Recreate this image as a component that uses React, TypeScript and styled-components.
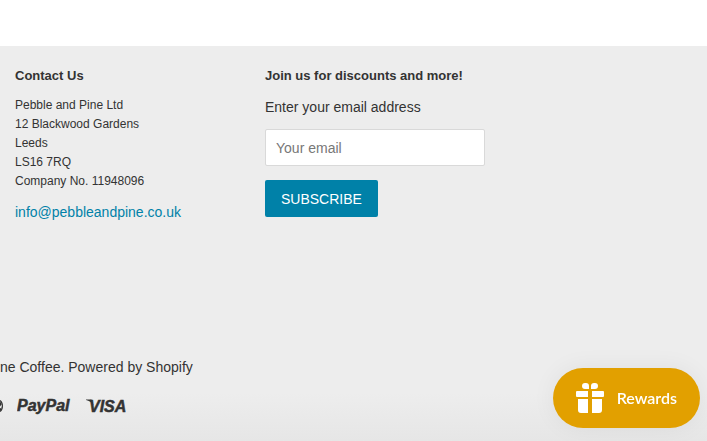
import React from "react";
import styled, { createGlobalStyle } from "styled-components";

const GlobalStyle = createGlobalStyle`
  *, *::before, *::after { box-sizing: border-box; }
  body {
    margin: 0;
    background: #fff;
    color: #333;
    font: 14px/20px "Liberation Sans", Arial, Helvetica, sans-serif;
  }
`;

const Page = styled.div`
  display: flex;
  flex-direction: column;
  min-height: 100vh;
  padding-top: 46px;
  overflow: hidden;
`;

const Footer = styled.footer`
  flex: 1;
  display: flex;
  flex-direction: column;
  justify-content: space-between;
  padding: 20px 15px 23px;
  background: linear-gradient(to top, #e6e6e6, #ededed 48px);
`;

const Columns = styled.div`
  display: grid;
  grid-template-columns: repeat(auto-fill, 220px);
  gap: 30px;
`;

const Column = styled.section`
  display: flex;
  flex-direction: column;
  align-items: flex-start;
`;

const Heading = styled.h4`
  margin: 0 0 10px;
  font-size: 13px;
  line-height: 20px;
  font-weight: 700;
`;

const Address = styled.address`
  margin-bottom: 11px;
  font-size: 12px;
  line-height: 19px;
  font-style: normal;
`;

const EmailLink = styled.a`
  color: #0081a8;
  text-decoration: none;
`;

const Form = styled.form`
  display: flex;
  flex-direction: column;
  align-items: flex-start;
  width: 100%;
`;

const Label = styled.label`
  margin: 1px 0 12px;
`;

const EmailInput = styled.input`
  width: 100%;
  height: 37px;
  margin-bottom: 14px;
  padding: 0 10px;
  border: 1px solid #d9d9d9;
  border-radius: 2px;
  background: #fff;
  color: #333;
  font: inherit;
  &::placeholder { color: #777; opacity: 1; }
`;

const SubscribeButton = styled.button`
  height: 37px;
  padding: 0 16px;
  border: 0;
  border-radius: 2px;
  background: #0081a8;
  color: #fff;
  font: inherit;
  text-transform: uppercase;
`;

const Legal = styled.div`
  display: flex;
  flex-direction: column;
  gap: 17px;
  margin-left: -15px;
`;

const Copyright = styled.p`
  margin: 0;
  a { color: inherit; text-decoration: none; }
`;

const Payments = styled.ul`
  display: flex;
  align-items: center;
  gap: 14px;
  margin: 0;
  padding: 0;
  list-style: none;
`;

const Payment = styled.li`
  display: flex;
  height: 24px;
  svg { display: block; }
`;

const RewardsButton = styled.button`
  position: fixed;
  right: 7px;
  bottom: 13px;
  display: flex;
  align-items: center;
  gap: 13px;
  height: 60px;
  padding: 0 23px;
  border: 0;
  border-radius: 30px;
  background: #e2a000;
  box-shadow: 0 0 24px rgba(0, 0, 0, 0.06);
  color: #fff;
  font: 600 16px/24px Lato, sans-serif;
`;

const addressLines = [
  "Pebble and Pine Ltd",
  "12 Blackwood Gardens",
  "Leeds",
  "LS16 7RQ",
  "Company No. 11948096",
];

const Wordmark = styled.text`
  fill: #333;
  stroke: #333;
  stroke-width: 0.5px;
  font: italic 700 16px "Liberation Sans", Arial, sans-serif;
`;

function CardMark() {
  return (
    <svg width="3" height="24" viewBox="0 0 3 24" aria-hidden="true">
      <path d="M0 6.500C1.600 7.600 2.400 9.700 2.400 12S1.600 16.400 0 17.500" fill="none" stroke="#333" strokeWidth="1.200" />
      <path d="M0 7.500l1.800 2.500L0 12.500zM0 14.500l1.600-1-.4 2.500-1.200 1z" fill="#333" />
    </svg>
  );
}

function PayPalMark() {
  return (
    <svg width="55" height="24" viewBox="0 0 55 24" role="img" aria-label="PayPal">
      <Wordmark x="0" y="17">PayPal</Wordmark>
    </svg>
  );
}

function VisaMark() {
  return (
    <svg width="44" height="24" viewBox="0 0 44 24" role="img" aria-label="Visa">
      <path d="M0 5.500h5.500l2 5.500C5.800 8.300 3 6.500 0 5.900z" fill="#333" />
      <Wordmark x="3" y="18">VISA</Wordmark>
    </svg>
  );
}

function GiftIcon() {
  return (
    <svg width="28" height="30" viewBox="0 0 28 30" fill="#fff" aria-hidden="true">
      <path d="M13 6H9A3 3 0 0 1 9 0h1a3 3 0 0 1 3 3zM15 6h4a3 3 0 0 0 0-6h-1a3 3 0 0 0-3 3z" />
      <path d="M1 8h11v6H1a1 1 0 0 1-1-1V9a1 1 0 0 1 1-1zM16 8h11a1 1 0 0 1 1 1v4a1 1 0 0 1-1 1H16z" />
      <path d="M2 16h10v14H5a3 3 0 0 1-3-3zM16 16h10v11a3 3 0 0 1-3 3h-7z" />
    </svg>
  );
}

export default function App() {
  return (
    <Page>
      <GlobalStyle />
      <Footer>
        <Columns>
          <Column>
            <Heading>Contact Us</Heading>
            <Address>
              {addressLines.map((line) => (
                <div key={line}>{line}</div>
              ))}
            </Address>
            <EmailLink href="mailto:info@pebbleandpine.co.uk">info@pebbleandpine.co.uk</EmailLink>
          </Column>
          <Column>
            <Heading>Join us for discounts and more!</Heading>
            <Form onSubmit={(event) => event.preventDefault()}>
              <Label htmlFor="email">Enter your email address</Label>
              <EmailInput id="email" type="email" placeholder="Your email" />
              <SubscribeButton type="submit">Subscribe</SubscribeButton>
            </Form>
          </Column>
        </Columns>
        <Legal>
          <Copyright>
            ne Coffee. <a href="#shopify">Powered by Shopify</a>
          </Copyright>
          <Payments>
            <Payment><CardMark /></Payment>
            <Payment><PayPalMark /></Payment>
            <Payment><VisaMark /></Payment>
          </Payments>
        </Legal>
      </Footer>
      <RewardsButton type="button">
        <GiftIcon />
        Rewards
      </RewardsButton>
    </Page>
  );
}
